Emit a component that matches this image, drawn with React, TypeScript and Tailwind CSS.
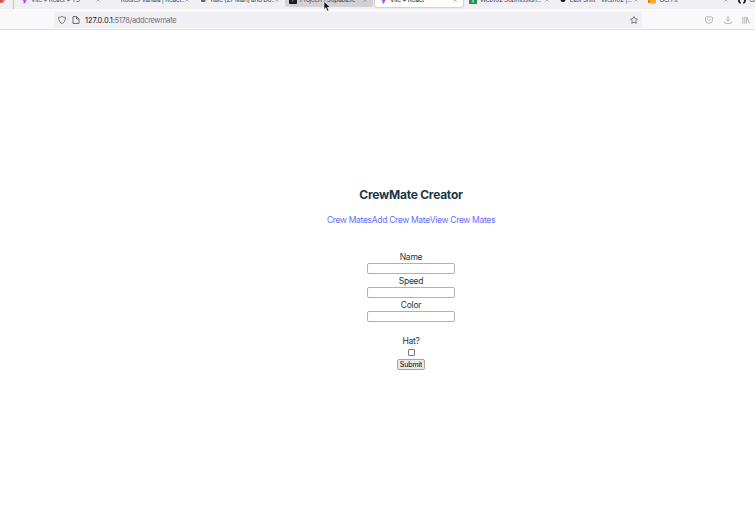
import React from 'react';

type Tab = { title: string; icon: React.ReactNode; state?: 'hover' | 'active' };

const Bolt = () => (
  <svg className="h-2 w-2" viewBox="0 0 8 8"><path d="M2 0h4.5v4.2L4.8 7.5H3.5V4.8L2 4z" fill="#b648fc" /></svg>
);
const Sheet = () => (
  <svg className="h-2 w-2" viewBox="0 0 8 8"><path d="M0 0h8v8H0z" fill="#21945a" /><path d="M3.6 1.5h1v5h-1z" fill="#fff" /></svg>
);
const Git = () => (
  <svg className="h-2 w-2" viewBox="0 0 8 8"><circle cx="4" cy="4" r="4" fill="#222" /><path d="M2.8 8V6.2C1 5 2 2.5 4 2.5S7 5 5.2 6.2V8z" fill="#eee" /></svg>
);

const tabs: Tab[] = [
  { title: 'Vite + React + TS', icon: <Bolt /> },
  { title: 'Routes Vanaia | React...', icon: null },
  { title: 'Rate (27 Man) and Do...', icon: <svg className="h-2 w-2" viewBox="0 0 8 8"><rect x="2" y="2" width="4.5" height="4" rx="1" fill="#666" /></svg> },
  { title: 'Project1 | Supabase', icon: <svg className="h-2 w-2" viewBox="0 0 8 8"><rect width="8" height="8" rx="1" fill="#1c1c1e" /><path d="M3 3l2 2-2 1z" fill="#596273" /></svg>, state: 'hover' },
  { title: 'Vite + React', icon: <Bolt />, state: 'active' },
  { title: 'Web102 Submission...', icon: <Sheet /> },
  { title: 'Last Shift - Web102 |...', icon: <svg className="h-2 w-2" viewBox="0 0 8 8"><circle cx="4" cy="3.5" r="2.5" fill="#111" /></svg> },
  { title: 'Get Fit', icon: <svg className="h-2 w-2" viewBox="0 0 8 8"><path d="M0 3h3l2-3 1 3h2v4L5 8 0 7z" fill="#f9ae25" /><path d="M0 3h2v4H0z" fill="#e77c22" /></svg> },
  { title: 'Code', icon: <Git /> },
];

function TabItem({ title, icon, state }: Tab) {
  const look =
    state === 'hover'
      ? 'bg-[#d1d1d6] w-[88px] mr-[2px]'
      : state === 'active'
        ? 'bg-white w-[88px] mr-[2px] shadow-[0_0_2px_rgba(0,0,0,0.45)]'
        : 'w-[89.7px]';
  return (
    <div className={`-mt-[8px] flex h-[15px] shrink-0 items-center rounded-[2px] pr-[5px] pl-1 ${look}`}>
      <span className="mt-px h-2 w-2 shrink-0">{icon}</span>
      <span className={`ml-[3px] w-0 grow overflow-hidden text-[6.5px] leading-[12px] tracking-[-0.3px] whitespace-nowrap ${state === 'active' ? 'text-[#15141a]' : 'text-[#4b4a52]'}`}>{title}</span>
      <svg className="h-1.5 w-1.5 shrink-0" viewBox="0 0 6 6"><path d="M1.3 1.3l3.4 3.4M4.7 1.3L1.3 4.7" stroke="#85858d" strokeWidth=".6" /></svg>
    </div>
  );
}

function Field({ label }: { label: string }) {
  return (
    <label className="flex h-6 flex-col items-center">
      <span className="h-[12px] leading-[12px]">{label}</span>
      <input className="h-[11px] w-[88px] shrink-0 rounded-[2px] border border-[#b0b0b6] bg-white" />
    </label>
  );
}

export default function App() {
  return (
    <div className="h-[516px] w-[755px] overflow-hidden bg-white font-['Inter',sans-serif]">
      <header className="h-[30px] overflow-hidden border-b border-[#dedee2] bg-[#f9f9fb]">
        <div className="flex h-[9px] bg-[#f0f0f4]">
          <div className="mr-[2px] flex w-[14px] shrink-0 border-r border-[#c5c5ca]">
            <svg className="h-[3px] w-[5px]" viewBox="0 0 5 3"><path d="M0 0h5L3 3H0z" fill="#f06a3c" /><path d="M0 0h2v2H0z" fill="#9b4fb5" /></svg>
          </div>
          {tabs.map((t, i) => <TabItem key={i} {...t} />)}
        </div>
        <div className="flex h-[21px] items-center pt-px">
          <div className="ml-[54px] flex h-4 w-[588px] shrink-0 items-center rounded-[2px] bg-[#f0f0f4] pr-1 pl-1">
            <svg className="h-2 w-2" viewBox="0 0 8 8" fill="none" stroke="#5b5b66" strokeWidth=".8"><path d="M4 .5C5 1.1 6.2 1.2 7.4 1.4 7.5 4.5 6 6.7 4 7.6 2 6.7.5 4.5.6 1.4 1.8 1.2 3 1.1 4 .5z" /></svg>
            <svg className="ml-[6px] h-2 w-2" viewBox="0 0 8 8" fill="none" stroke="#5b5b66" strokeWidth=".9"><path d="M1 .6h3.7L7 3v4.4H1zM4.5.6V3H7" /></svg>
            <span className="mt-px ml-[5px] text-[7.5px] leading-4 tracking-[-0.36px] text-[#71717a]"><span className="tracking-[-0.08px] text-[#15141a]">127.0.0.1</span>:5178/addcrewmate</span>
            <svg className="ml-auto h-2 w-2" viewBox="0 0 8 8" fill="none" stroke="#5b5b66" strokeWidth=".8" strokeLinejoin="round"><path d="M4 .5l1.1 2.2 2.4.4-1.7 1.7.4 2.5L4 6.2 1.8 7.3l.4-2.5L.5 3.1l2.4-.4z" /></svg>
          </div>
          <div className="ml-[63px] flex w-[45px] shrink-0 items-center justify-between text-[#a5a5ac]">
            <svg className="h-2 w-2" viewBox="0 0 8 8" fill="none" stroke="currentColor" strokeWidth=".8"><path d="M1.5.8h5q1 0 1 1v2a3.5 3.5 0 0 1-7 0v-2q0-1 1-1zM2.3 3.2 4 4.8l1.7-1.6" /></svg>
            <svg className="h-2 w-2" viewBox="0 0 8 8" fill="none" stroke="currentColor" strokeWidth=".8"><path d="M4 0v5M2 3.2l2 2 2-2M.6 5.5v1q0 .8.8.8h5.2q.8 0 .8-.8v-1" /></svg>
            <svg className="h-2 w-2" viewBox="0 0 8 8" fill="none" stroke="currentColor" strokeWidth=".8"><path d="M.8 .7v7M2.8.7v7M4.6.7v7M5 1.1l2.5 6.3" /></svg>
          </div>
        </div>
      </header>
      <svg className="absolute top-[1px] left-[323px] h-[11px] w-[8px]" viewBox="0 0 8 11"><path d="M1 .5v8l1.9-1.8 1.3 3.5 1.6-.7-1.4-3.2 2.8-.1z" fill="#111" stroke="#fff" strokeWidth=".6" /></svg>
      <main className="ml-[311px] flex w-[200px] flex-col items-center pt-[156px] text-[8.5px] tracking-[-0.25px] text-[#213547]">
        <h1 className="text-[12px] leading-[18px] font-bold whitespace-nowrap">CrewMate Creator</h1>
        <nav className="mt-[10px] flex h-3 text-[8.5px] leading-3 font-normal tracking-[-0.32px] whitespace-nowrap text-[#646cff]">
          <a>Crew Mates</a><a>Add Crew Mate</a><a>View Crew Mates</a>
        </nav>
        <form className="mt-[25px] flex flex-col items-center">
          <Field label="Name" />
          <Field label="Speed" />
          <Field label="Color" />
          <label className="mt-3 flex flex-col items-center leading-3">
            Hat?
            <input type="checkbox" className="mt-[2px] h-[7px] w-[7px] appearance-none rounded-[1px] border border-[#777780] bg-white" />
          </label>
          <button type="button" className="mt-[3px] h-[11px] w-[28px] rounded-[2px] border border-[#a3a3a8] bg-[#e9e9ed] text-[7px] leading-[9px] tracking-[-0.1px] text-black">Submit</button>
        </form>
      </main>
    </div>
  );
}
